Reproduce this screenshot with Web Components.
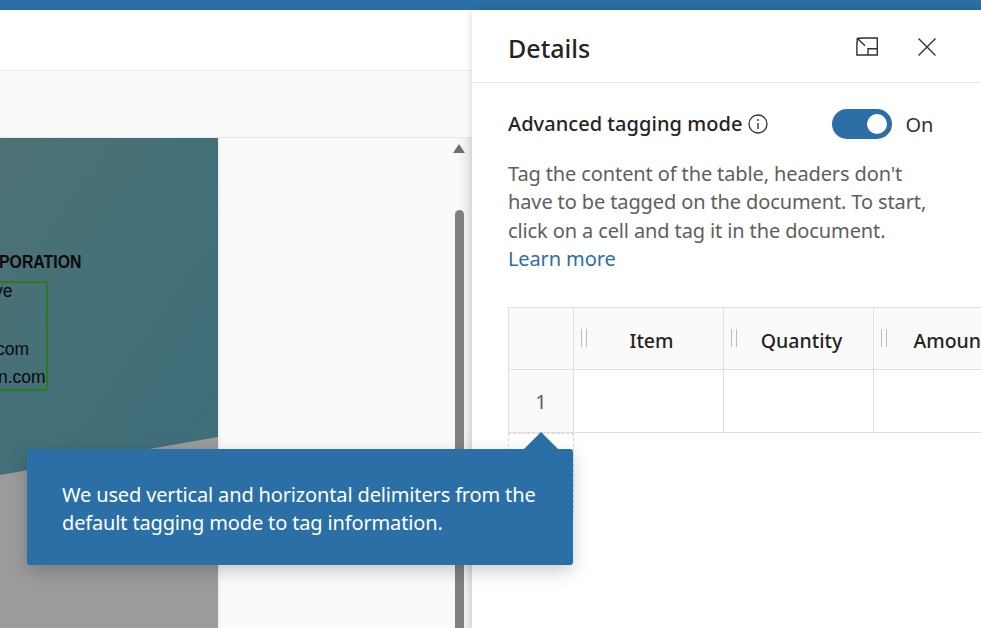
<!DOCTYPE html>
<html lang="en"><head><meta charset="utf-8"><title>Details</title>
<style>
html,body{margin:0;height:100%;overflow:hidden;background:#fff}
body{font-family:"Noto Sans","Open Sans",sans-serif;color:#252423}
app-shell{height:628px}
</style></head><body>
<app-shell>
  <doc-viewer slot="main"></doc-viewer>
  <details-panel slot="panel"></details-panel>
  <coach-tip slot="tip">We used vertical and horizontal delimiters from the default tagging mode to tag information.</coach-tip>
</app-shell>
<script>
function def(name,html){customElements.define(name,class extends HTMLElement{constructor(){super();this.attachShadow({mode:'open'}).innerHTML=html}})}
def('app-shell',`<style>
:host{display:flex;flex-direction:column;position:relative;overflow:hidden;width:981px}
.top{height:10px;background:#2a6fa5;flex:none}
.row{display:flex;flex:1;min-height:0}
.main{flex:1;min-width:0;display:flex}
.panel{width:509px;flex:none;display:flex;position:relative}
.tip{position:absolute;left:27px;top:449px}
</style><div class="top"></div><div class="row"><div class="main"><slot name="main"></slot></div><div class="panel"><slot name="panel"></slot></div></div><div class="tip"><slot name="tip"></slot></div>`);
def('doc-viewer',`<style>
:host{display:flex;flex-direction:column;flex:1;min-width:0}
.bar{height:60px;flex:none;background:#fff;border-bottom:1px solid #ebebeb}
.sub{height:67px;flex:none;background:#fafafa;border-bottom:1px solid #e6e6e6;box-sizing:border-box}
.canvas{flex:1;background:#fafafa;position:relative;overflow:hidden;display:flex;min-height:0}
.page{width:218px;flex:none;margin-top:-2px;position:relative;overflow:hidden;background:#9b9b9b;box-shadow:1px 0 3px rgba(0,0,0,.08)}
.teal{position:absolute;inset:0;background:linear-gradient(125deg,#4d7274 0%,#437079 45%,#3e6d78 100%);clip-path:polygon(0 0,100% 0,100% 301px,0 339px);box-sizing:border-box}
.rule{position:absolute;left:0;right:0;top:0;height:1px;background:#3f7484}
.gap{position:absolute;left:0;right:0;top:1px;height:1px;background:#fff}
.t{position:absolute;font:17.5px/20px "Liberation Sans",Arial,sans-serif;color:#0a0a0a;white-space:nowrap}
.h{font-weight:700;font-size:18px;transform:scaleX(.88);transform-origin:left}
.box{position:absolute;left:-10px;top:145px;width:54px;height:106px;border:2px solid #2a7a1f;border-radius:3px}
.arrow{position:absolute;left:453px;top:6px;width:0;height:0;border-left:6.5px solid transparent;border-right:6.5px solid transparent;border-bottom:9px solid #6f6f6f}
.thumb{position:absolute;left:455px;top:72px;bottom:0;width:9px;background:#808080;border-radius:5px 5px 0 0}
.edge{position:absolute;right:0;top:0;bottom:0;width:16px;background:linear-gradient(90deg,transparent,rgba(0,0,0,.07))}
</style><div class="bar"></div><div class="sub"></div><div class="canvas"><div class="page"><div class="teal"></div><div class="rule"></div><div class="gap"></div>
<span class="t h" style="left:-1px;top:116px">PORATION</span>
<span class="t" style="left:-6px;top:145px">ve</span>
<span class="t" style="left:-4px;top:203px">com</span>
<span class="t" style="left:-2px;top:231px">n.com</span>
<div class="box"></div></div><div class="edge"></div><div class="arrow"></div><div class="thumb"></div></div>`);
def('details-panel',`<style>
:host{display:block;flex:1;background:#fff;box-shadow:0 0 8px rgba(0,0,0,.16);position:relative;overflow:hidden}
.head{height:72px;border-bottom:1px solid #e8e8e8;display:flex;align-items:center;padding:0 36px;gap:0}
h2{margin:0;font-size:25px;font-weight:500;flex:1;line-height:32px;padding-top:4px}
.icons{display:flex;gap:39px;align-items:center;padding-right:8px;padding-top:1px}
svg{display:block;flex:none}
.body{padding:25px 0 0 36px}
.adv{display:flex;align-items:center;height:32px;white-space:nowrap}
.adv b{font-size:20px;font-weight:500;letter-spacing:.05px;line-height:32px;margin-top:-1px;flex:none}
.info{margin-left:6px}
.tog{margin-left:64px;width:60px;height:30px;border-radius:15px;background:#2a6fa5;position:relative;flex:none}
.tog i{position:absolute;right:5px;top:5px;width:20px;height:20px;border-radius:50%;background:#fff}
.on{margin-left:13px;font-size:20px;color:#323130}
p{margin:20px 0 0;font-size:20px;line-height:28.3px;color:#605e5c;letter-spacing:-.12px;white-space:nowrap}
a{color:#2a6fa5;text-decoration:none}
table{border-collapse:collapse;table-layout:fixed;width:525px;margin-top:34px;font-size:19.5px}
td,th{border:1px solid #e1dfdd;padding:0;position:relative;text-align:center}
th{background:#fafafa;font-weight:500;color:#252423;height:61px}
td{height:62px}
.n{background:#fafafa;color:#605e5c;font-size:20px}
th span{position:absolute;left:7px;top:21px;width:4px;height:18px;border-left:1px solid #bdbdbd;border-right:1px solid #bdbdbd}
th em{font-style:normal;display:inline-block;padding-left:6px;padding-top:3px}
.amt em{padding-left:0;margin-left:-5px}
.dash{position:absolute;left:36px;top:423px;width:66px;height:80px;border:1px dashed #d6d6d6;box-sizing:border-box}
</style><div class="head"><h2>Details</h2><div class="icons">
<svg width="22" height="19" viewBox="0 0 22 19" fill="none" stroke="#323130" stroke-width="1.4"><path d="M5.5 1H21.3V18H.9V5.5"/><path d="M12 18V11.8H21.3"/><path d="M1.2 1.2L9 8.7M1.2 1.2H6M1.2 1.2V6"/></svg>
<svg width="20" height="20" viewBox="0 0 20 20" fill="none" stroke="#323130" stroke-width="1.4"><path d="M1.5 1.5L18.5 18.5M18.5 1.5L1.5 18.5"/></svg>
</div></div>
<div class="body"><div class="adv"><b>Advanced tagging mode</b><svg class="info" width="20" height="20" viewBox="0 0 20 20" fill="none" stroke="#323130"><circle cx="10" cy="10" r="9" stroke-width="1.3"/><path d="M10 9V15" stroke-width="1.4"/><circle cx="10" cy="6" r=".9" fill="#323130" stroke="none"/></svg><div class="tog"><i></i></div><span class="on">On</span></div>
<p>Tag the content of the table, headers don't<br>have to be tagged on the document. To start,<br>click on a cell and tag it in the document.<br><a href="#">Learn more</a></p>
<table><colgroup><col style="width:65px"><col style="width:150px"><col style="width:150px"><col style="width:160px"></colgroup>
<tr><th></th><th><span></span><em>Item</em></th><th><span></span><em>Quantity</em></th><th class="amt"><span></span><em>Amount</em></th></tr>
<tr><td class="n">1</td><td></td><td></td><td></td></tr></table></div><div class="dash"></div>`);
def('coach-tip',`<style>
:host{display:block;width:546px;height:116px;box-sizing:border-box;background:#2a6fa5;border-radius:3px;color:#fff;padding:32px 30px 0 35px;font-size:20px;line-height:28px;letter-spacing:-.15px;position:relative;box-shadow:0 6px 18px rgba(0,0,0,.2)}
:host::before{content:"";position:absolute;left:497px;top:-17px;width:34px;height:34px;background:#2a6fa5;clip-path:polygon(50% 0,100% 50%,50% 100%,0 50%)}
div{position:relative}
</style><div><slot></slot></div>`);
</script></body></html>
